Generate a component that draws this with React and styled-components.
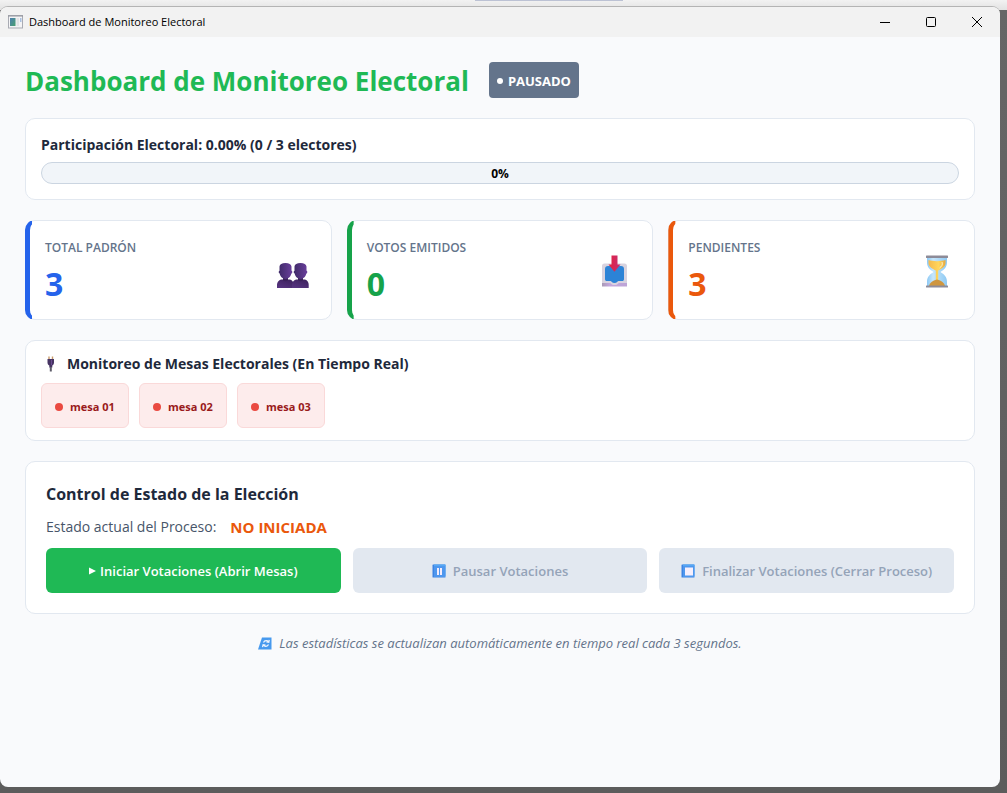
import React from "react";
import styled, { createGlobalStyle } from "styled-components";

const GlobalStyle = createGlobalStyle`
    *,
    *::before {
        box-sizing: border-box;
    }

    body {
        margin: 0;
        font-family: "Open Sans", "Noto Sans", sans-serif;
        background: #5f5f5f;
    }
`

//VENTANA
const Escritorio = styled.div`
    min-height: 100vh;
    display: flex;
    flex-direction: column;
    background: linear-gradient(to bottom, #f2f2f2 0, #e2e2e2 10px, #666666 10px, #5c5c5c 100%);
`

const FranjaSuperior = styled.div`
    height: 6px;
    display: flex;
    justify-content: center;
    padding-left: 91px;

    &::before {
        content: "";
        width: 148px;
        height: 1px;
        background: #bcc2d4;
    }
`

const Ventana = styled.div`
    flex: 1;
    display: flex;
    flex-direction: column;
    margin: 0 7px 6px 0;
    border-top: 1px solid #b4b4b4;
    border-radius: 8px;
    background: #f9fafc;
    overflow: hidden;
`

const BarraTitulo = styled.header`
    height: 30px;
    display: flex;
    align-items: center;
    background: #f2f2f2;
`

const NombreApp = styled.div`
    flex: 1;
    display: flex;
    align-items: center;
    gap: 6px;
    padding-left: 8px;
    font-size: 11px;
    line-height: 20px;
    color: #000000;
`

const BotonVentana = styled.button`
    width: 46px;
    height: 30px;
    display: flex;
    align-items: center;
    justify-content: center;
    padding: 0;
    border: none;
    background: transparent;
    color: #000000;
`

const Contenido = styled.main`
    display: flex;
    flex-direction: column;
    gap: 20px;
    padding: 25px;
`

//ENCABEZADO
const Encabezado = styled.div`
    display: flex;
    align-items: center;
    gap: 20px;
`

const TituloPrincipal = styled.h1`
    margin: 0;
    padding-top: 2px;
    font-size: 26px;
    line-height: 34px;
    font-weight: 700;
    color: #1fb955;
`

const Insignia = styled.span`
    height: 36px;
    display: flex;
    align-items: center;
    gap: 5px;
    padding: 2px 8px 0;
    border-radius: 4px;
    background: #64748b;
    color: #ffffff;
    font-size: 13px;
    font-weight: 700;
`

const Punto = styled.i`
    width: ${({ $size }) => $size}px;
    height: ${({ $size }) => $size}px;
    border-radius: 50%;
    background: ${({ $color }) => $color};
`

//TARJETAS
const Tarjeta = styled.section`
    padding: ${({ $padding }) => $padding};
    border: 1px solid #e2e8f0;
    border-radius: 10px;
    background: #ffffff;
`

const Subtitulo = styled.h2`
    display: flex;
    align-items: center;
    gap: 6px;
    margin: 0;
    font-size: 14px;
    line-height: 22px;
    font-weight: 700;
    color: #1e293b;
`

const Progreso = styled.div`
    height: 22px;
    margin-top: 6px;
    border: 1px solid #cbd5e1;
    border-radius: 11px;
    background: #f1f5f9;
    color: #000000;
    font-size: 12px;
    line-height: 22px;
    font-weight: 700;
    text-align: center;
`

const Estadisticas = styled.div`
    display: grid;
    grid-template-columns: repeat(3, 1fr);
    gap: 15px;
`

const TarjetaDato = styled.section`
    position: relative;
    display: flex;
    align-items: center;
    justify-content: space-between;
    padding: 16px 20px 14px 19px;
    border: 1px solid #e2e8f0;
    border-radius: 10px;
    background: #ffffff;

    &::before {
        content: "";
        position: absolute;
        inset: -1px auto -1px -1px;
        width: 10px;
        border: 3px solid ${({ $color }) => $color};
        border-left-width: 5px;
        border-right: none;
        border-radius: 10px 0 0 10px;
        clip-path: inset(1px 3px 1px 0);
    }
`

const Etiqueta = styled.h3`
    margin: 0 0 4px;
    font-size: 12px;
    line-height: 22px;
    font-weight: 600;
    color: #64748b;
`

const Valor = styled.p`
    margin: 0;
    font-size: 32px;
    line-height: 42px;
    font-weight: 700;
    color: ${({ $color }) => $color};
`

//MESAS
const IconoMesa = styled.span`
    width: 20px;
    display: flex;
    justify-content: center;
`

const ListaMesas = styled.ul`
    display: flex;
    gap: 10px;
    margin: 8px 0 0;
    padding: 0;
    list-style: none;
`

const Mesa = styled.li`
    min-width: 88px;
    height: 45px;
    display: flex;
    align-items: center;
    justify-content: center;
    gap: 7px;
    padding-top: 2px;
    border: 1px solid #fad9d9;
    border-radius: 6px;
    background: #fdecec;
    color: #991b1b;
    font-size: 11px;
    font-weight: 700;
`

//CONTROL
const TituloControl = styled.h2`
    margin: 0;
    font-size: 16px;
    line-height: 24px;
    font-weight: 700;
    color: #1e293b;
`

const Estado = styled.p`
    display: flex;
    gap: 14px;
    margin: 8px 0;
    font-size: 14px;
    line-height: 26px;
    color: #475569;

    strong {
        font-size: 15px;
        font-weight: 700;
        color: #ea580c;
    }
`

const Botones = styled.div`
    display: grid;
    grid-template-columns: repeat(3, 1fr);
    gap: 12px;
`

const Boton = styled.button`
    height: 45px;
    display: flex;
    align-items: center;
    justify-content: center;
    gap: ${({ $gap }) => $gap}px;
    padding: 0;
    border: none;
    border-radius: 6px;
    background: #1fb955;
    color: #ffffff;
    font-family: inherit;
    font-size: 13px;
    font-weight: 600;

    &:disabled {
        background: #e2e8f0;
        color: #94a3b8;
    }
`

const Nota = styled.footer`
    display: flex;
    align-items: center;
    justify-content: center;
    gap: 7px;
    font-size: 13px;
    line-height: 18px;
    font-style: italic;
    color: #64748b;
`

//ICONOS
const IconoApp = () => (
    <svg width="15" height="14" viewBox="0 0 15 14">
        <rect x="0.5" y="0.5" width="14" height="12.5" fill="#f4f4f6" stroke="#a9abb3" />
        <path d="M0 1h15" stroke="#92949c" strokeWidth="1" />
        <rect x="2" y="3" width="5.5" height="8" fill="url(#app)" />
        <rect x="8.5" y="3" width="2.5" height="8" fill="#e2e3e6" />
        <rect x="12" y="3" width="1.5" height="4" fill="#a8bfe0" />
        <defs>
            <linearGradient id="app" x1="0" y1="0" x2="1" y2="1">
                <stop offset="0" stopColor="#4d7fb0" />
                <stop offset="1" stopColor="#49a070" />
            </linearGradient>
        </defs>
    </svg>
)

const IconoPersonas = () => (
    <svg width="34" height="34" viewBox="1 -2 34 34">
        <defs>
            <linearGradient id="cabeza" x1="0" y1="0" x2="1" y2="0">
                <stop offset="0" stopColor="#3f2a68" />
                <stop offset="1" stopColor="#6a3f9c" />
            </linearGradient>
            <linearGradient id="hombros" x1="0" y1="1" x2="0.6" y2="0">
                <stop offset="0" stopColor="#583583" />
                <stop offset="1" stopColor="#402461" />
            </linearGradient>
            <g id="persona">
                <path d="M1 32v-3c0-3.500 2.500-5.500 5.500-5.500h6c3.200 0 5.200 2 5.200 5.500v3z" fill="url(#hombros)" />
                <path d="M7 20h5v4c-.6 1.500-4.400 1.500-5 0z" fill="#3a2259" />
                <path d="M3.500 10.500C3.700 8.300 5.800 7 9.500 7s5.700 1.300 6 3.500v4.200c1 0 1.200 2.600-.2 2.900-.6 3.300-3 5.400-5.800 5.400s-5.200-2.100-5.800-5.400c-1.400-.3-1.200-2.900-.2-2.900z" fill="url(#cabeza)" />
            </g>
        </defs>
        <use href="#persona" />
        <use href="#persona" x="15" />
    </svg>
)

const IconoBandeja = () => (
    <svg width="34" height="34" viewBox="1 -1 34 34">
        <defs>
            <linearGradient id="flecha" x1="0" y1="0" x2="1" y2="0">
                <stop offset="0" stopColor="#e5213f" />
                <stop offset="1" stopColor="#c42e72" />
            </linearGradient>
            <linearGradient id="base" x1="0" y1="0" x2="1" y2="0">
                <stop offset="0" stopColor="#a99ab5" />
                <stop offset="0.3" stopColor="#c3a6dc" />
                <stop offset="1" stopColor="#bda4d6" />
            </linearGradient>
        </defs>
        <path d="M5 26h25v5.500H5z" fill="url(#base)" />
        <path d="M5 11c0-1.500.8-2.500 2.500-2.500h20c1.700 0 2.500 1 2.500 2.500v17h-8c-.8 0-1 2-4.500 2s-3.700-2-4.500-2H5z" fill="#d8d3df" />
        <path d="M8 14c0-2 1-3 3-3h13c2 0 3 1 3 3v10c0 1.500-.7 2-2 2h-3.500c-.8 0-1.500 2-4 2s-3.200-2-4-2H10c-1.300 0-2-.5-2-2z" fill="#2c83d6" />
        <path d="M14.500.5h6v9h3l-5.600 6.700c-.3.300-.6.300-.9 0L11.500 9.500h3z" fill="url(#flecha)" />
    </svg>
)

const IconoReloj = () => (
    <svg width="34" height="34" viewBox="0 -1 34 34">
        <defs>
            <linearGradient id="arena" x1="0" y1="0" x2="1" y2="0">
                <stop offset="0" stopColor="#f4b94d" />
                <stop offset="0.6" stopColor="#ffd65c" />
                <stop offset="1" stopColor="#e8a93e" />
            </linearGradient>
            <linearGradient id="vidrio" x1="0" y1="0" x2="1" y2="0">
                <stop offset="0" stopColor="#8cc9f5" />
                <stop offset="0.3" stopColor="#c6e6fb" />
                <stop offset="1" stopColor="#8fcaf3" />
            </linearGradient>
        </defs>
        <path d="M7 2.500h20V7c0 5.500-3 7.500-6.500 10 3.500 2.500 6.500 4.500 6.500 10v4.500H7V27c0-5.500 3-7.500 6.500-10C10 14.500 7 12.500 7 7z" fill="url(#vidrio)" />
        <path d="M8.500 5c4 1.500 13 1.500 17 0V8c0 4-4.500 6-7.300 7.500v10h-2.400v-10C13 14 8.500 12 8.500 8z" fill="url(#arena)" />
        <path d="M9 31c.5-3 3.500-5.500 8-6.500 4.500 1 7.500 3.500 8 6.500z" fill="#cf963f" />
        <path d="M22 7c1 3-.5 4.500-2.500 6" fill="none" stroke="#fff3c8" strokeWidth="1" />
        <rect x="6" y="0.500" width="22" height="2.500" rx="0.5" fill="#8d8b98" />
        <rect x="6" y="30.500" width="22" height="2" rx="0.5" fill="#8d8b98" />
    </svg>
)

const IconoEnchufe = () => (
    <svg width="8" height="16" viewBox="0 0 8 16">
        <path d="M2 0.500v3.500M5.500 0.500v3.500" stroke="#c99a68" strokeWidth="1.400" />
        <path d="M0.500 3h6.500v3.500c0 1.500-.8 2.500-1.700 3v2H2.300v-2C1.300 9 .5 8 .5 6.500z" fill="#463463" />
        <path d="M3.800 11v4.500" stroke="#5c5b68" strokeWidth="2" />
        <path d="M4.500 4v5" stroke="#6b4a91" strokeWidth="1" />
    </svg>
)

const IconoCuadro = ({ pausa }) => (
    <svg width="14" height="14" viewBox="0 0 14 14">
        <rect x="0.5" y="0.500" width="13" height="13" rx="0.600" fill="#3d83e3" />
        <path d="M2 0.500h11.500v11.500H2z" fill="#55a8f5" />
        <rect x="2" y="2" width="11" height="11" fill="#4e97ee" />
        {pausa ? (
            <path d="M5 4h2v7H5zM8 4h2v7H8z" fill="#f4ecfc" />
        ) : (
            <rect x="4" y="3.500" width="8" height="8" fill="#f6effc" />
        )}
    </svg>
)

const IconoActualizar = () => (
    <svg width="14" height="13" viewBox="0 0 14 13">
        <path d="M4 0.500H13.500V12.500H0z" fill="#4799ee" />
        <path d="M5.500 5.500c1-2.300 4-2.300 5.200-.6M11.300 2.800l-.5 2.500-2.400-.4M10.500 7.500c-1 2.300-4 2.300-5.200.6M4.500 10.200l.6-2.500 2.400.4" fill="none" stroke="#eef4fe" strokeWidth="1.200" />
    </svg>
)

const datos = [
    { etiqueta: "TOTAL PADRÓN", valor: 3, color: "#2563eb", Icono: IconoPersonas },
    { etiqueta: "VOTOS EMITIDOS", valor: 0, color: "#16a34a", Icono: IconoBandeja },
    { etiqueta: "PENDIENTES", valor: 3, color: "#ea580c", Icono: IconoReloj },
]

const mesas = ["mesa 01", "mesa 02", "mesa 03"]

export default function App(){
    return(
        <Escritorio>
            <GlobalStyle/>
            <FranjaSuperior/>
            <Ventana>
                <BarraTitulo>
                    <NombreApp><IconoApp/>Dashboard de Monitoreo Electoral</NombreApp>
                    <BotonVentana aria-label="Minimizar">
                        <svg width="10" height="10"><path d="M0 5.500h10" stroke="currentColor"/></svg>
                    </BotonVentana>
                    <BotonVentana aria-label="Maximizar">
                        <svg width="10" height="10"><rect x="0.5" y="0.5" width="9" height="9" rx="1" fill="none" stroke="currentColor"/></svg>
                    </BotonVentana>
                    <BotonVentana aria-label="Cerrar">
                        <svg width="10" height="10"><path d="M0 0l10 10M10 0L0 10" stroke="currentColor"/></svg>
                    </BotonVentana>
                </BarraTitulo>

                <Contenido>
                    <Encabezado>
                        <TituloPrincipal>Dashboard de Monitoreo Electoral</TituloPrincipal>
                        <Insignia><Punto $size={6} $color="#ffffff"/>PAUSADO</Insignia>
                    </Encabezado>

                    <Tarjeta $padding="15px">
                        <Subtitulo id="participacion">Participación Electoral: 0.00% (0 / 3 electores)</Subtitulo>
                        <Progreso role="progressbar" aria-labelledby="participacion" aria-valuenow={0} aria-valuemin={0} aria-valuemax={100}>0%</Progreso>
                    </Tarjeta>

                    <Estadisticas>
                        {datos.map(({ etiqueta, valor, color, Icono }) => (
                            <TarjetaDato key={etiqueta} $color={color}>
                                <div>
                                    <Etiqueta>{etiqueta}</Etiqueta>
                                    <Valor $color={color}>{valor}</Valor>
                                </div>
                                <Icono/>
                            </TarjetaDato>
                        ))}
                    </Estadisticas>

                    <Tarjeta $padding="12px 15px">
                        <Subtitulo>
                            <IconoMesa><IconoEnchufe/></IconoMesa>
                            Monitoreo de Mesas Electorales (En Tiempo Real)
                        </Subtitulo>
                        <ListaMesas>
                            {mesas.map((mesa) => (
                                <Mesa key={mesa}><Punto $size={8} $color="#ea4a41"/>{mesa}</Mesa>
                            ))}
                        </ListaMesas>
                    </Tarjeta>

                    <Tarjeta $padding="20px">
                        <TituloControl>Control de Estado de la Elección</TituloControl>
                        <Estado>Estado actual del Proceso: <strong>NO INICIADA</strong></Estado>
                        <Botones>
                            <Boton $gap={4}>
                                <svg width="7" height="8"><path d="M0 0.500L7 4 0 7.500z" fill="currentColor"/></svg>
                                Iniciar Votaciones (Abrir Mesas)
                            </Boton>
                            <Boton $gap={7} disabled><IconoCuadro pausa/>Pausar Votaciones</Boton>
                            <Boton $gap={7} disabled><IconoCuadro/>Finalizar Votaciones (Cerrar Proceso)</Boton>
                        </Botones>
                    </Tarjeta>

                    <Nota><IconoActualizar/>Las estadísticas se actualizan automáticamente en tiempo real cada 3 segundos.</Nota>
                </Contenido>
            </Ventana>
        </Escritorio>
    )
}
